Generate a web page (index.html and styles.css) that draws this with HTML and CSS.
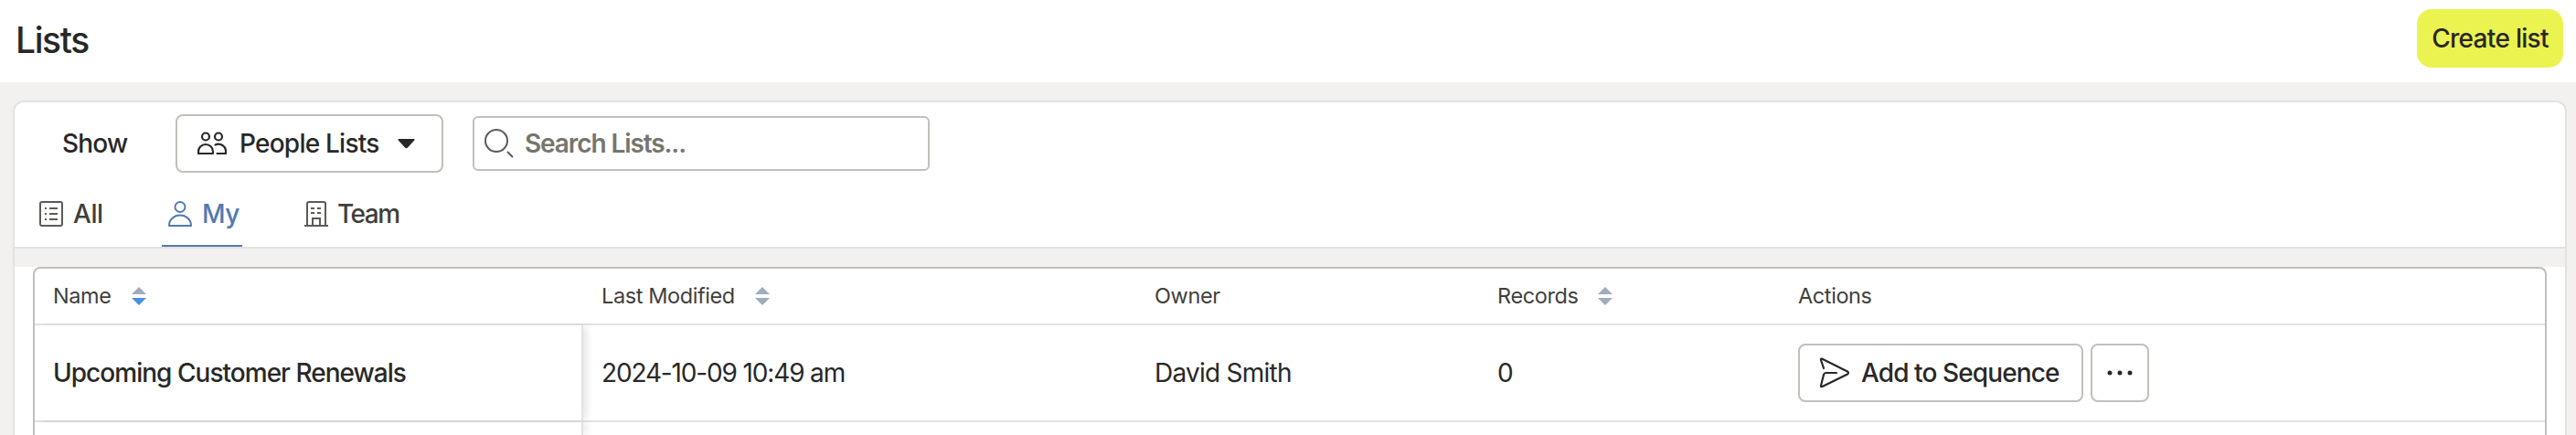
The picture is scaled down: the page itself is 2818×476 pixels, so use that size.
FILE: index.html
```html
<!DOCTYPE html>
<html lang="en">
<head>
<meta charset="UTF-8" />
<meta name="viewport" content="width=device-width, initial-scale=1" />
<title>Lists</title>
<link rel="stylesheet" href="styles.css">
</head>
<body>
  <header class="page-header">
    <h1>Lists</h1>
    <button class="create">Create list</button>
  </header>

  <main class="card">
    <div class="toolbar">
      <span class="show">Show</span>
      <button class="btn people">
        <svg width="32" height="26" viewBox="0 0 32 26" fill="none" stroke="currentColor" stroke-width="2.200" stroke-linecap="round" stroke-linejoin="round">
          <circle cx="9" cy="5.500" r="4" />
          <circle cx="23" cy="5.500" r="4" />
          <path d="M1 24v-2a8 8 0 0 1 16 0v2z" />
          <path d="M19.500 14.500a8 8 0 0 1 11.500 7.500v2H21.500" />
        </svg>
        <span>People Lists</span>
        <svg class="caret" width="19" height="12" viewBox="0 0 19 12" fill="currentColor">
          <path d="M1 1h17q1 .5 .3 1.500L11 10.500q-1.500 1.500-3 0L.7 2.500Q0 1.500 1 1z" />
        </svg>
      </button>
      <label class="search">
        <svg width="32" height="34" viewBox="0 0 32 34" fill="none" stroke="currentColor" stroke-width="2">
          <circle cx="13" cy="14" r="12" />
          <path d="M25 26l6 6" />
        </svg>
        <input type="text" placeholder="Search Lists..." aria-label="Search Lists">
      </label>
    </div>

    <nav class="tabs">
      <a class="tab">
        <svg width="26" height="28" viewBox="0 0 26 28" fill="none" stroke="currentColor" stroke-width="2">
          <rect x="1" y="1" width="24" height="26" rx="2" />
          <path d="M6 8h2M11 8h9M6 14h2M11 14h9M6 20h2M11 20h9" />
        </svg>
        <span>All</span>
      </a>
      <a class="tab active">
        <svg width="26" height="28" viewBox="0 0 26 28" fill="none" stroke="currentColor" stroke-width="2" stroke-linejoin="round">
          <circle cx="13" cy="6.500" r="5.500" />
          <path d="M1 27v-.5a12 11 0 0 1 24 0v.5z" />
        </svg>
        <span>My</span>
      </a>
      <a class="tab team">
        <svg width="26" height="28" viewBox="0 0 26 28" fill="none" stroke="currentColor" stroke-width="2">
          <path d="M3 27V3q0-2 2-2h16q2 0 2 2v24M0 27h26M9 27v-8h8v8" />
          <path d="M7 8h4M14 8h4M7 13h4M14 13h4" />
        </svg>
        <span>Team</span>
      </a>
    </nav>

    <section class="content">
      <div class="table">
        <div class="row head">
          <div class="cell">
            <span>Name</span>
            <svg class="sort" width="16" height="20" viewBox="0 0 16 20"><path class="off" d="M8 0l8 8H0z" /><path class="on" d="M0 12h16l-8 8z" /></svg>
          </div>
          <div class="cell">
            <span>Last Modified</span>
            <svg class="sort" width="16" height="20" viewBox="0 0 16 20"><path class="off" d="M8 0l8 8H0zM0 12h16l-8 8z" /></svg>
          </div>
          <div class="cell"><span>Owner</span></div>
          <div class="cell">
            <span>Records</span>
            <svg class="sort" width="16" height="20" viewBox="0 0 16 20"><path class="off" d="M8 0l8 8H0zM0 12h16l-8 8z" /></svg>
          </div>
          <div class="cell"><span>Actions</span></div>
        </div>
        <div class="row">
          <div class="cell sticky"><span class="list-name">Upcoming Customer Renewals</span></div>
          <div class="cell"><span class="date">2024-10-09 10:49 am</span></div>
          <div class="cell"><span>David Smith</span></div>
          <div class="cell">0</div>
          <div class="cell actions">
            <button class="btn sequence">
              <svg width="34" height="34" viewBox="0 0 34 34" fill="none" stroke="currentColor" stroke-width="2.200" stroke-linecap="round" stroke-linejoin="round">
                <path d="M5 12L2 3q-.4-2 1.500-1.300L31 15.500q2 1.500 0 3L3.500 32Q1.600 32.500 2 31L5 19q.6-2 2.500-2H19" />
              </svg>
              <span>Add to Sequence</span>
            </button>
            <button class="btn more" aria-label="More">
              <svg width="28" height="6" viewBox="0 0 28 6" fill="currentColor"><circle cx="3" cy="3" r="2.500" /><circle cx="14" cy="3" r="2.500" /><circle cx="25" cy="3" r="2.500" /></svg>
            </button>
          </div>
        </div>
        <div class="row last">
          <div class="cell sticky"></div>
        </div>
      </div>
    </section>
  </main>
</body>
</html>
```

FILE: styles.css
```css
* {
  box-sizing: border-box;
  margin: 0;
  padding: 0;
}

body {
  background: #f2f1ef;
  color: #282827;
  font-family: Inter, "Liberation Sans", sans-serif;
  font-size: 28px;
  line-height: 36px;
  height: 476px;
  overflow: hidden;
}

svg {
  display: block;
  flex: none;
}

span {
  white-space: nowrap;
}

button,
input {
  font: inherit;
  color: inherit;
}

.page-header {
  background: #fff;
  height: 90px;
  padding: 10px 14px 16px 17px;
  display: flex;
  justify-content: space-between;
}

h1 {
  font-size: 39px;
  font-weight: 500;
  line-height: 68px;
  letter-spacing: -1.4px;
}

.create {
  background: #ebf351;
  border: none;
  border-radius: 16px;
  width: 160px;
  height: 64px;
  font-weight: 500;
  letter-spacing: -0.7px;
  padding-bottom: 1px;
}

.card {
  background: #fff;
  border: 2px solid #e2e2e1;
  border-bottom: none;
  border-radius: 12px 12px 0 0;
  margin: 20px 10px 0 14px;
  height: 366px;
  overflow: hidden;
}

.toolbar {
  display: flex;
  align-items: center;
  padding: 13px 0 0 52px;
  font-weight: 500;
}

.show {
  width: 124px;
  letter-spacing: -0.8px;
}

.btn {
  background: #fff;
  border: 2px solid #c0c0bb;
  border-radius: 8px;
  height: 64px;
  display: flex;
  align-items: center;
  font-weight: 500;
}

.people {
  width: 293px;
  padding-left: 22px;
  letter-spacing: -0.77px;
}

.people span {
  margin-left: 14px;
  width: 173px;
  text-align: left;
}

.search {
  border: 2px solid #c0c0bb;
  border-radius: 6px;
  width: 500px;
  height: 60px;
  margin-left: 32px;
  padding-left: 11px;
  display: flex;
  align-items: center;
  gap: 12px;
  color: #5b5b56;
}

.search input {
  border: none;
  outline: none;
  background: none;
  width: 400px;
  font-weight: 600;
  letter-spacing: -1.1px;
}

.search input::placeholder {
  color: #75756e;
}

.tabs {
  height: 83px;
  padding: 10px 0 0 20px;
  border-bottom: 2px solid #e2e2e1;
  display: flex;
  gap: 61px;
  font-weight: 500;
  color: #3f3f3c;
}

.tab {
  display: flex;
  align-items: center;
  gap: 11px;
  width: 80px;
  padding: 1px 0 0 7px;
  border-bottom: 2px solid transparent;
  letter-spacing: -0.4px;
}

.tab svg {
  color: #5b5b56;
}

.tab.active,
.tab.active svg {
  color: #527ab2;
}

.tab.active {
  width: 88px;
  border-color: #527ab2;
}

.team {
  gap: 10px;
  letter-spacing: -1.5px;
}

.content {
  border-top: 20px solid #f2f1ef;
  padding: 0 20px;
}

.table {
  border: 2px solid #c0c0bc;
  border-bottom: none;
  border-radius: 8px 8px 0 0;
  overflow: hidden;
}

.row {
  display: grid;
  grid-template-columns: 600px 605px 375px 329px 1fr;
  height: 106px;
  border-bottom: 2px solid #e2e2e1;
}

.row.last {
  height: 14px;
  border-bottom: none;
}

.cell {
  display: flex;
  align-items: center;
  padding-left: 20px;
  letter-spacing: -0.75px;
}

.head {
  height: 62px;
  font-size: 23.5px;
  color: #3f3f3c;
}

.head .cell {
  gap: 22px;
  letter-spacing: -0.4px;
}

.off {
  fill: #a0abc0;
}

.on {
  fill: #4a90e2;
}

.sticky {
  border-right: 2px solid #e2e2e1;
  box-shadow: 6px 0 8px -2px rgba(0, 0, 0, 0.1);
}

.list-name {
  font-weight: 500;
  letter-spacing: -0.97px;
}

.date {
  letter-spacing: -1.15px;
}

.actions {
  gap: 8px;
}

.sequence {
  width: 312px;
  padding-left: 21px;
  gap: 12px;
  letter-spacing: -0.9px;
}

.more {
  width: 64px;
  justify-content: center;
}
```
